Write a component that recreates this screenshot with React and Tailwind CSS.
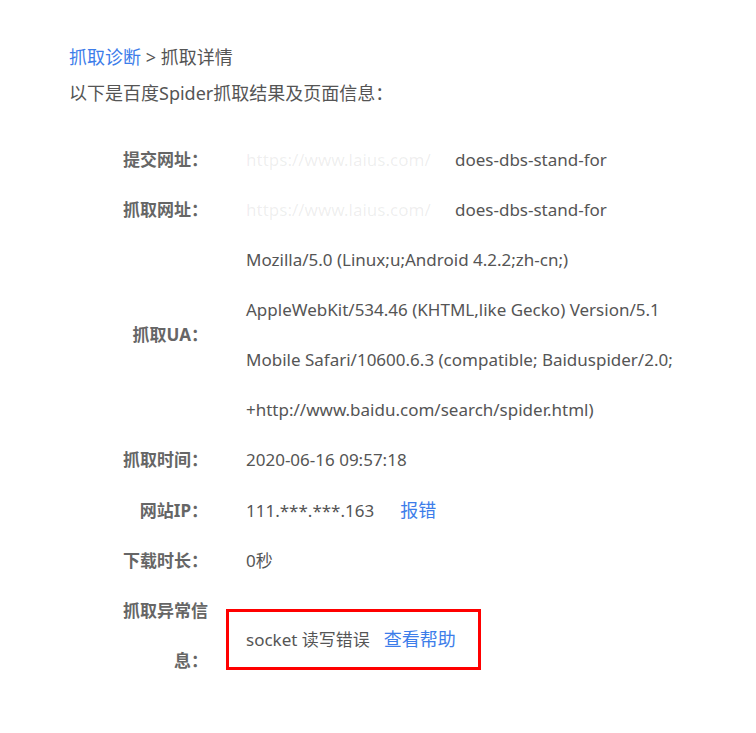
import React from "react";

const font = { fontFamily: '"Noto Sans", "Noto Sans CJK SC", sans-serif' };

function Row({ label, children }) {
	return (
		<div className="flex items-center">
			<div className="w-[98px] shrink-0 text-right font-bold text-[#666] leading-[50px]">
				{label}
			</div>
			<div className="pl-[38px] leading-[50px]">{children}</div>
		</div>
	);
}

// first part of the url is blurred out in the screenshot
function MaskedUrl() {
	return (
		<span className="whitespace-nowrap">
			<span className="inline-block w-[209px] align-bottom text-[#555]/10">
				https://www.laius.com/
			</span>
			does-dbs-stand-for
		</span>
	);
}

export default function App() {
	return (
		<div className="min-h-[733px] bg-white text-[17px] text-[#555]" style={font}>
			<div className="pl-[69px] pt-[43px] text-[18px]">
				<div className="leading-[28px]">
					<span className="text-[#3d7dea]">抓取诊断</span>
					<span> &gt; 抓取详情</span>
				</div>
				<div className="mt-[8px] leading-[28px]">以下是百度Spider抓取结果及页面信息：</div>
			</div>

			<div className="mt-[28px] pl-[110px]">
				<Row label="提交网址：">
					<MaskedUrl />
				</Row>
				<Row label="抓取网址：">
					<MaskedUrl />
				</Row>
				<Row label="抓取UA：">
					<div>Mozilla/5.0 (Linux;u;Android 4.2.2;zh-cn;)</div>
					<div>AppleWebKit/534.46 (KHTML,like Gecko) Version/5.1</div>
					<div>Mobile Safari/10600.6.3 (compatible; Baiduspider/2.0;</div>
					<div>+http://www.baidu.com/search/spider.html)</div>
				</Row>
				<Row label="抓取时间：">2020-06-16 09:57:18</Row>
				<Row label="网站IP：">
					111.***.***.163<span className="ml-[26px] text-[18px] text-[#3d7dea]">报错</span>
				</Row>
				<Row label="下载时长：">0秒</Row>
				<div className="flex items-start">
					<div className="w-[98px] shrink-0 text-right font-bold text-[#666] leading-[50px]">
						抓取异常信息：
					</div>
					<div className="ml-[18px] mt-[23px] border-[3px] border-[#f00] pl-[17px] pr-[22px] leading-[54px]">
						socket 读写错误<span className="ml-[14px] text-[18px] text-[#3d7dea]">查看帮助</span>
					</div>
				</div>
			</div>
		</div>
	);
}
